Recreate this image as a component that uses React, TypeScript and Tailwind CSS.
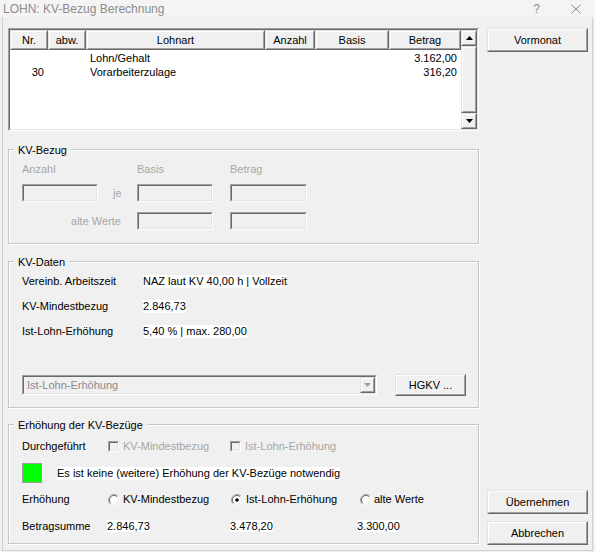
import React from 'react';

type P = { className?: string; inner?: string; children?: React.ReactNode };

function Raised({ className = '', inner = '', children }: P) {
  return (
    <div className={`border border-t-[#e3e3e3] border-l-[#e3e3e3] border-r-[#696969] border-b-[#696969] ${className}`}>
      <div className={`w-full h-full border border-t-white border-l-white border-r-[#a0a0a0] border-b-[#a0a0a0] bg-[#f0f0f0] flex items-center justify-center ${inner}`}>
        {children}
      </div>
    </div>
  );
}

function Sunken({ className = '', inner = '', children }: P) {
  return (
    <div className={`border border-t-[#a0a0a0] border-l-[#a0a0a0] border-r-white border-b-white ${className}`}>
      <div className={`w-full h-full border border-t-[#696969] border-l-[#696969] border-r-[#e3e3e3] border-b-[#e3e3e3] ${inner}`}>
        {children}
      </div>
    </div>
  );
}

function Group({ title, className = '', children }: { title: string; className?: string; children?: React.ReactNode }) {
  return (
    <div className={`relative border border-[#c6c6c6] shadow-[inset_1px_1px_0_#fff,1px_1px_0_#fff] ${className}`}>
      <span className="absolute left-[5px] top-[-6px] px-[4px] bg-[#f0f0f0] leading-[13px] text-black">{title}</span>
      {children}
    </div>
  );
}

function Radio({ checked = false }: { checked?: boolean }) {
  return (
    <svg width="12" height="12" viewBox="0 0 12 12" className="shrink-0">
      <circle cx="6" cy="6" r="5.5" fill="#fff" />
      <path d="M2.1 9.9 A5.5 5.5 0 0 1 9.9 2.1" stroke="#a0a0a0" strokeWidth="1" fill="none" />
      <path d="M2.8 9.2 A4.5 4.5 0 0 1 9.2 2.8" stroke="#696969" strokeWidth="1" fill="none" />
      <path d="M9.9 2.1 A5.5 5.5 0 0 1 2.1 9.9" stroke="#ffffff" strokeWidth="1" fill="none" />
      <path d="M9.2 2.8 A4.5 4.5 0 0 1 2.8 9.2" stroke="#e3e3e3" strokeWidth="1" fill="none" />
      {checked && <circle cx="6" cy="6" r="1.8" fill="#000" />}
    </svg>
  );
}

function Check() {
  return <Sunken className="w-[11px] h-[11px] shrink-0" inner="bg-[#f0f0f0]" />;
}

const cols = [
  { w: 'w-[38px]', label: 'Nr.' },
  { w: 'w-[38px]', label: 'abw.' },
  { w: 'w-[179px]', label: 'Lohnart' },
  { w: 'w-[50px]', label: 'Anzahl' },
  { w: 'w-[74px]', label: 'Basis' },
  { w: 'w-[72px]', label: 'Betrag' },
];

const rows = [
  { nr: '', abw: '', art: 'Lohn/Gehalt', betrag: '3.162,00' },
  { nr: '30', abw: '', art: 'Vorarbeiterzulage', betrag: '316,20' },
];

export default function App() {
  return (
    <div className="w-[595px] h-[552px] bg-[#f0f0f0] font-['Liberation_Sans',Arial,sans-serif] text-[11px] leading-[13px] text-black overflow-hidden select-none">
      {/* title bar */}
      <div className="h-[17px] flex items-center pl-[3px] pr-[14px] bg-[#f4f4f4] text-[#8c8c8c]">
        <span className="text-[12px] leading-[14px]">LOHN: KV-Bezug Berechnung</span>
        <span className="ml-auto text-[12px] leading-[14px]">?</span>
        <svg width="10" height="10" viewBox="0 0 10 10" className="ml-[31px]">
          <path d="M0.5 0.5 L9.5 9.5 M9.5 0.5 L0.5 9.5" stroke="#8c8c8c" strokeWidth="1" />
        </svg>
      </div>

      {/* body */}
      <div className="mx-[2px] h-[534px] border-x border-b border-[#cfcfcf] flex pl-[5px] pr-[4px] pt-[11px]">
        {/* left column */}
        <div className="w-[471px] flex flex-col">
          {/* list */}
          <Sunken className="h-[103px] w-[471px]" inner="flex bg-white">
            <div className="w-[451px] flex flex-col">
              <div className="flex h-[20px]">
                {cols.map((c) => (
                  <Raised key={c.label} className={`${c.w} h-[20px]`}>
                    <span className="leading-[13px]">{c.label}</span>
                  </Raised>
                ))}
              </div>
              <div className="pt-[1px]">
                {rows.map((r, i) => (
                  <div key={i} className="flex h-[14px] leading-[14px]">
                    <div className="w-[38px] text-right pr-[4px]">{r.nr}</div>
                    <div className="w-[38px]">{r.abw}</div>
                    <div className="w-[179px] pl-[4px]">{r.art}</div>
                    <div className="w-[50px]"></div>
                    <div className="w-[74px]"></div>
                    <div className="w-[72px] text-right pr-[4px]">{r.betrag}</div>
                  </div>
                ))}
              </div>
            </div>
            <div className="w-[16px] flex flex-col bg-[#f0f0f0]">
              <Raised className="h-[16px]">
                <svg width="7" height="4" viewBox="0 0 7 4"><path d="M3.5 0 L7 4 L0 4Z" fill="#000" /></svg>
              </Raised>
              <Raised className="flex-1" />
              <Raised className="h-[16px]">
                <svg width="7" height="4" viewBox="0 0 7 4"><path d="M0 0 L7 0 L3.5 4Z" fill="#000" /></svg>
              </Raised>
            </div>
          </Sunken>

          {/* KV-Bezug */}
          <Group title="KV-Bezug" className="mt-[18px] h-[95px]">
            <div className="pl-[13px] pt-[13px] text-[#a6a6a6]">
              <div className="flex h-[13px]">
                <span className="w-[115px]">Anzahl</span>
                <span className="w-[93px]">Basis</span>
                <span>Betrag</span>
              </div>
              <div className="flex h-[18px] mt-[8px] items-center">
                <Sunken className="w-[76px] h-[18px]" inner="bg-[#f0f0f0]" />
                <span className="w-[39px] pl-[15px]">je</span>
                <Sunken className="w-[76px] h-[18px]" inner="bg-[#f0f0f0]" />
                <Sunken className="w-[77px] h-[18px] ml-[17px]" inner="bg-[#f0f0f0]" />
              </div>
              <div className="flex h-[18px] mt-[10px] items-center">
                <span className="w-[115px] text-right pr-[16px]">alte Werte</span>
                <Sunken className="w-[76px] h-[18px]" inner="bg-[#f0f0f0]" />
                <Sunken className="w-[77px] h-[18px] ml-[17px]" inner="bg-[#f0f0f0]" />
              </div>
            </div>
          </Group>

          {/* KV-Daten */}
          <Group title="KV-Daten" className="mt-[17px] h-[147px]">
            <div className="pl-[13px] pt-[13px] flex flex-col gap-[12px]">
              <div className="flex h-[13px]">
                <span className="w-[121px]">Vereinb. Arbeitszeit</span>
                <span className="bg-white">NAZ laut KV 40,00 h | Vollzeit</span>
              </div>
              <div className="flex h-[13px]">
                <span className="w-[121px]">KV-Mindestbezug</span>
                <span className="bg-white">2.846,73</span>
              </div>
              <div className="flex h-[13px]">
                <span className="w-[121px]">Ist-Lohn-Erhöhung</span>
                <span className="bg-white">5,40 % | max. 280,00</span>
              </div>
            </div>
            <div className="pl-[13px] mt-[36px] flex items-center h-[22px]">
              <Sunken className="w-[355px] h-[20px]" inner="bg-[#f0f0f0] flex items-center">
                <span className="pl-[3px] text-[#8a8a8a] flex-1">Ist-Lohn-Erhöhung</span>
                <Raised className="w-[15px] h-full">
                  <svg width="7" height="4" viewBox="0 0 7 4"><path d="M0 0 L7 0 L3.5 4Z" fill="#a0a0a0" /></svg>
                </Raised>
              </Sunken>
              <Raised className="ml-[18px] w-[71px] h-[22px]">HGKV ...</Raised>
            </div>
          </Group>

          {/* Erhöhung der KV-Bezüge */}
          <Group title="Erhöhung der KV-Bezüge" className="mt-[16px] h-[120px]">
            <div className="pl-[13px] pt-[15px]">
              <div className="flex h-[13px] items-center">
                <span className="w-[85px]">Durchgeführt</span>
                <div className="w-[123px] flex items-center gap-[4px] pl-[1px] text-[#a6a6a6]">
                  <Check />
                  <span>KV-Mindestbezug</span>
                </div>
                <div className="flex items-center gap-[4px] text-[#a6a6a6]">
                  <Check />
                  <span>Ist-Lohn-Erhöhung</span>
                </div>
              </div>
              <div className="flex h-[20px] items-center mt-[10px]">
                <div className="w-[20px] h-[20px] border border-[#a0a0a0] bg-[#00ff00]" />
                <span className="ml-[15px] bg-white">Es ist keine (weitere) Erhöhung der KV-Bezüge notwendig</span>
              </div>
              <div className="flex h-[13px] items-center mt-[10px]">
                <span className="w-[85px]">Erhöhung</span>
                <div className="w-[123px] flex items-center gap-[3px] pl-[1px]">
                  <Radio />
                  <span>KV-Mindestbezug</span>
                </div>
                <div className="w-[127px] flex items-center gap-[3px] pl-[1px]">
                  <Radio checked />
                  <span>Ist-Lohn-Erhöhung</span>
                </div>
                <div className="flex items-center gap-[2px] pl-[3px]">
                  <Radio />
                  <span>alte Werte</span>
                </div>
              </div>
              <div className="flex h-[13px] items-center mt-[14px]">
                <span className="w-[85px]">Betragsumme</span>
                <div className="w-[123px]"><span className="bg-white">2.846,73</span></div>
                <div className="w-[127px]"><span className="bg-white">3.478,20</span></div>
                <div><span className="bg-white">3.300,00</span></div>
              </div>
            </div>
          </Group>
        </div>

        {/* right column */}
        <div className="ml-[8px] w-[101px] flex flex-col pb-[5px]">
          <Raised className="h-[24px]">Vormonat</Raised>
          <div className="flex-1" />
          <Raised className="h-[24px]">Übernehmen</Raised>
          <Raised className="h-[24px] mt-[7px]">Abbrechen</Raised>
        </div>
      </div>
    </div>
  );
}
